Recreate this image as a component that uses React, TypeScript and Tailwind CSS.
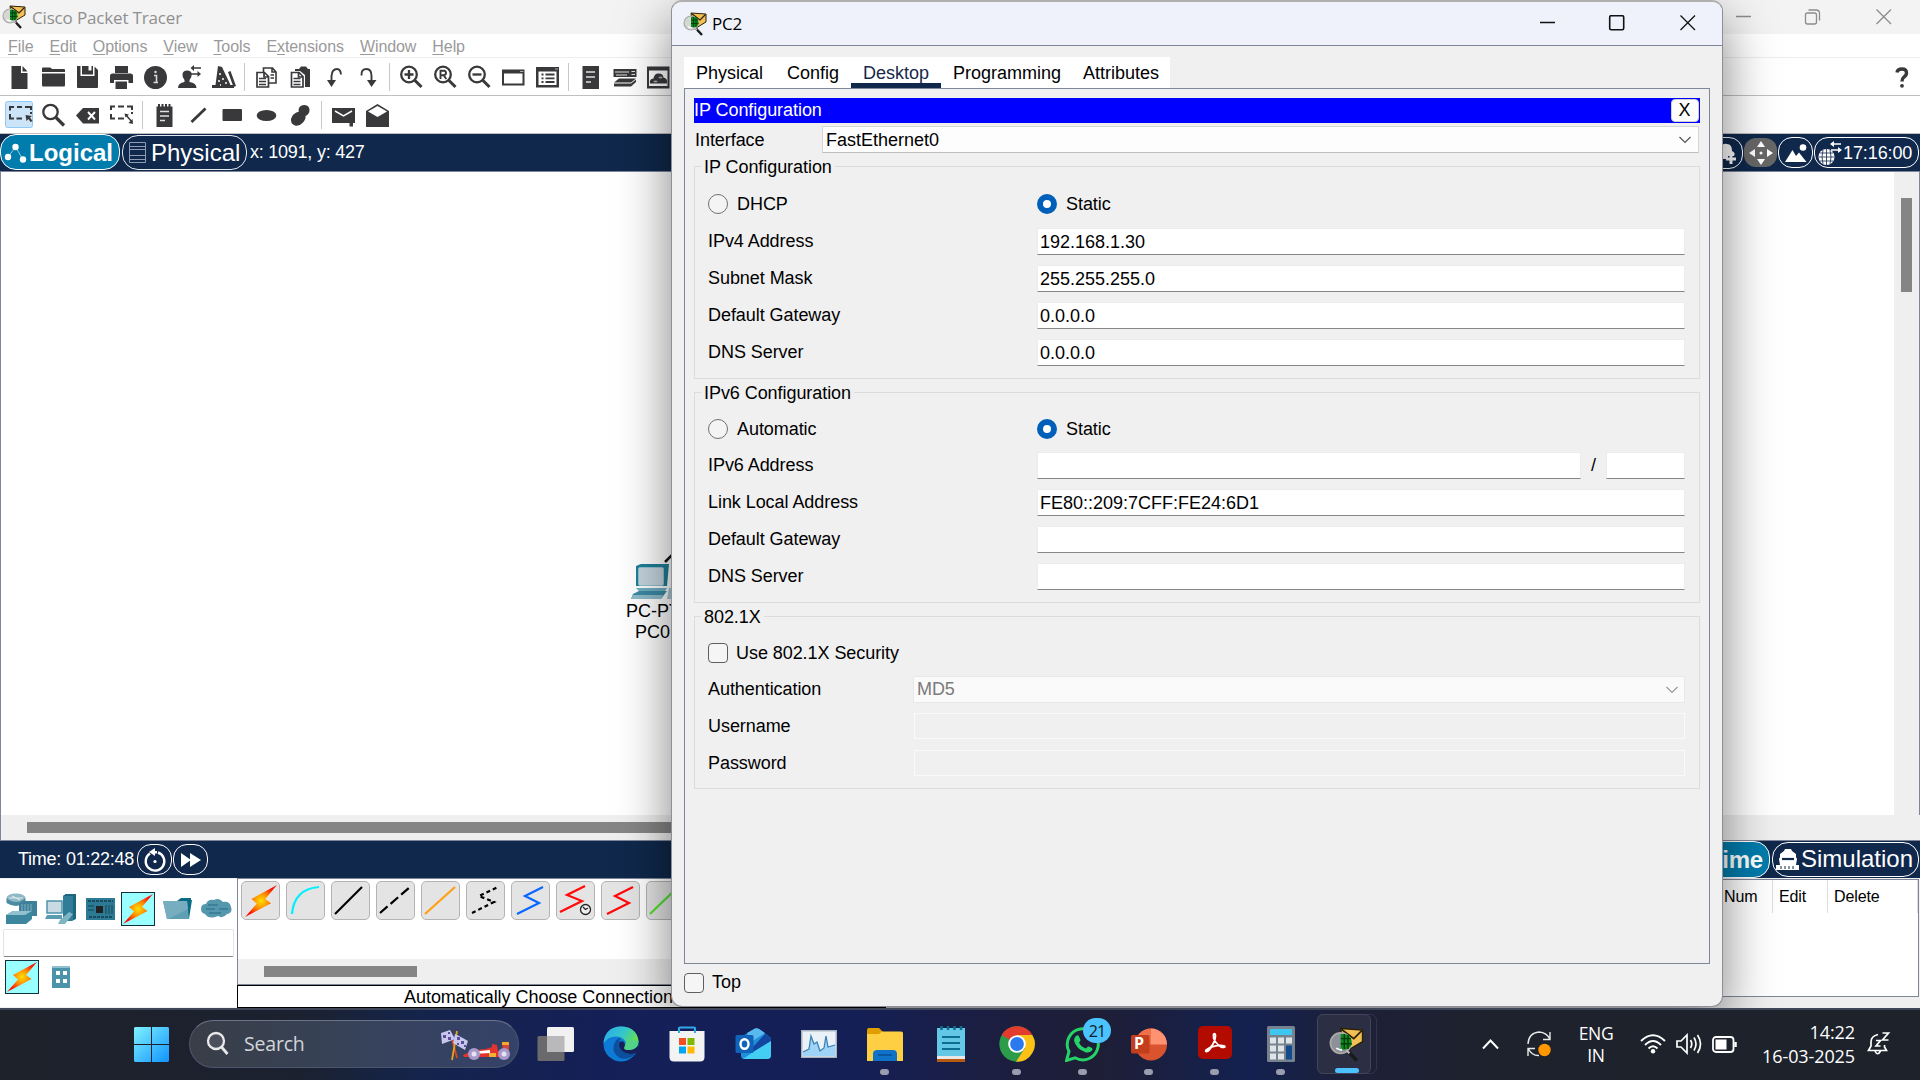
import React from "react";

const INK = "#39393b";

function Ico({ children }: { children?: React.ReactNode }) {
  return (
    <svg width="34" height="37" viewBox="0 0 34 37" fill={INK} stroke="none" className="shrink-0">
      {children}
    </svg>
  );
}

function Sep() {
  return (
    <div className="flex w-[9px] shrink-0 justify-center">
      <div className="mt-[5px] h-[28px] w-px bg-[#c8c8c8]" />
    </div>
  );
}

function TracerIcon({ size, dark = false }: { size: number; dark?: boolean }) {
  return (
    <svg width={size} height={size} viewBox="0 0 24 24" className="shrink-0">
      <path d="M8 1 L23 2 L23 10 L13 16 L9 9 Z" fill="#f1bf55" stroke="#2b2208" strokeWidth="1" />
      <path d="M8.5 1.5 L17 8 L22.5 2.5" fill="none" stroke="#2b2208" strokeWidth="1.2" />
      <circle cx="8" cy="11" r="7" fill={dark ? "#8d9098" : "#d5d8d2"} stroke="#a9aaa6" strokeWidth="1.2" />
      <path d="M8 5 C13 4 16 7 15.500 12 C14 15.500 11 16 8 15 Z" fill="#0a8a1e" />
      <path d="M8 8 H15 M8 11.500 H15.500 M10.500 5 V15 M13 5.500 V15" stroke="#033a0b" strokeWidth="0.9" />
      <path d="M5 14.500 Q7 16 9 15.500" stroke="#fff" strokeWidth="1.200" fill="none" />
      <path d="M13 16.500 L19 23" stroke="#1a1a1a" strokeWidth="2.400" />
      <path d="M12 16 L14 18" stroke="#bbb" strokeWidth="1.500" />
    </svg>
  );
}

/* ---------- application tool bars ---------- */

function Magnifier({ children }: { children?: React.ReactNode }) {
  return (
    <Ico>
      <circle cx="15" cy="16.500" r="7.800" fill="none" stroke={INK} strokeWidth="2.300" />
      <path d="M20.500 22 L27.500 29" stroke={INK} strokeWidth="3" />
      {children}
    </Ico>
  );
}

function ToolbarMain() {
  return (
    <div className="flex h-[38px] items-start border-b border-[#bfbfbf] bg-white pl-[2px]">
      <Ico>
        <path d="M9.500 8 H19 V15 H25.500 V31 H9.500 Z M20.500 8 L25.500 13.500 H20.500 Z" />
      </Ico>
      <Ico>
        <path d="M6 10.500 Q6 9.500 7 9.500 H14 Q15 9.500 16 11 H28 Q29 11 29 12 V14 H6 Z M6 15.500 H29 V27 Q29 28.500 28 28.500 H7 Q6 28.500 6 27 Z" />
      </Ico>
      <Ico>
        <path fillRule="evenodd" d="M7 8 H10.500 V18 H24.500 V8.500 L28 12 V29 Q28 30 27 30 H8 Q7 30 7 29 Z M12 8 H18.500 V12.500 H21.500 V8 H23 V16.500 H12 Z" />
      </Ico>
      <Ico>
        <path d="M11 8 H24 V15 H11 Z M6 18 Q6 15.500 8.500 15.500 H26.500 Q29 15.500 29 18 V25 H24.500 V22 H10 V25 H6 Z M11.500 23.500 H23 V31 H11.500 Z" />
      </Ico>
      <Ico>
        <circle cx="17.500" cy="19.500" r="11.500" />
        <path d="M16 17.500 H18.500 V24 M15.500 24.500 H20" stroke="#d8d8d8" strokeWidth="1.600" fill="none" />
        <circle cx="17.500" cy="14" r="1.200" fill="#ddd" />
      </Ico>
      <Ico>
        <path d="M6 30 Q6 25 12.500 24 V22 Q10 19 10.500 16 Q11 12.500 15 12.500 Q19.500 12.500 19.700 16 Q20 19 17.500 22 V24 Q24.500 25 24.500 30 Z" />
        <path d="M20 10 H29 M18.500 16 H27" stroke={INK} strokeWidth="1.600" />
        <path d="M22 7 V13 L18.500 10 Z M25.500 13 V19 L29 16 Z" />
      </Ico>
      <Ico>
        <path d="M12 8 L16 9 L24.500 27 H28 V30 H6 V27 H9.500 Z M22 14 L24.500 13 L30 28 L27.500 29 Z" />
        <path d="M13 16 h2 M16 21 h2 M12 23 h2 M19 25 h2 M14 27 h1" stroke="#fff" strokeWidth="1.500" />
      </Ico>
      <Sep />
      <Ico>
        <path d="M14.500 10 H23.500 L27 14 V25 H14.500 Z M23 10 V14 H27" fill="#fff" stroke={INK} strokeWidth="1.600" />
        <path d="M8 14.500 H15.500 L19.500 18.500 V29 H8 Z M15 14.500 V19 H19.500" fill="#fff" stroke={INK} strokeWidth="1.700" />
        <path d="M10 20.500 H17 M10 23.500 H17 M10 26.500 H17 M21.500 17 H25 M21.500 20 H25" stroke={INK} strokeWidth="1.300" />
      </Ico>
      <Ico>
        <path d="M12 11 H16 L18 8.500 H23 L25 11 H27 V29 H22 V17 L17 13 H12 Z" />
        <path d="M8.500 14.500 H16 L20 18.500 V29 H8.500 Z M15.500 14.500 V19 H20" fill="#fff" stroke={INK} strokeWidth="1.700" />
        <path d="M10.500 20.500 H17.500 M10.500 23.500 H17.500 M10.500 26.500 H17.500" stroke={INK} strokeWidth="1.300" />
      </Ico>
      <Ico>
        <path d="M14.500 24 V18 Q15 11 20 11 Q23.500 11 24 16.500" fill="none" stroke={INK} strokeWidth="1.900" />
        <path d="M10 22 L19 22 L14.500 29 Z" />
      </Ico>
      <Ico>
        <path d="M10.500 17.500 Q10 11 15.500 11 Q20.500 11 20.500 18 V24" fill="none" stroke={INK} strokeWidth="1.900" />
        <path d="M16 22 L25.500 22 L20.500 29 Z" />
      </Ico>
      <Sep />
      <Magnifier>
        <path d="M10.500 16.500 H19.500 M15 12 V21" stroke={INK} strokeWidth="2.300" />
      </Magnifier>
      <Magnifier>
        <path d="M12.500 21 V12.800 H16 Q18 13 18 15 Q18 17 15.500 17.200 H12.500 M15.500 17 L18.300 21" stroke={INK} strokeWidth="1.900" fill="none" />
      </Magnifier>
      <Magnifier>
        <path d="M10.500 16.500 H19.500" stroke={INK} strokeWidth="2.300" />
      </Magnifier>
      <Ico>
        <path fillRule="evenodd" d="M6 11.500 H28.500 V27.500 H6 Z M8 15.500 V25.500 H26.500 V15.500 Z" />
        <path d="M24 13.500 H27.500" stroke="#aaa" />
      </Ico>
      <Ico>
        <path fillRule="evenodd" d="M6 9 H29 V29.500 H6 Z M8.500 13.500 V27 H26.500 V13.500 Z" />
        <path d="M11.500 16.500 H13.500 M15.500 16.500 H24.500 M11.500 20.300 H13.500 M15.500 20.300 H24.500 M11.500 24 H13.500 M15.500 24 H24.500" stroke={INK} strokeWidth="1.800" />
        <path d="M25 11 H28" stroke="#aaa" />
      </Ico>
      <Sep />
      <Ico>
        <path d="M9.500 8 H26 V31 H9.500 Z" />
        <path d="M13 14 H22 M13 19 H22 M13 24 H18" stroke="#e0e0e0" strokeWidth="1.500" />
      </Ico>
      <Ico>
        <path d="M6.500 11 H29.500 V19 H6.500 Z" />
        <path d="M8 14 H22 M24.500 13.500 H28 M24.500 16.500 H28 M9 17 H20" stroke="#ddd" strokeWidth="1.200" />
        <path d="M12 20.500 H29 L24 24.500 H7 Z M7 25.500 H24 L29 21.500 V24 L24 28.500 H7 Z" />
      </Ico>
      <Ico>
        <path fillRule="evenodd" d="M6 8.500 H28.500 V30.500 H6 Z M8 12.500 V28 H26.500 V12.500 Z" />
        <path d="M9 25.500 Q8 21 12.500 20.500 Q13.500 15 18 15.500 Q22 15.500 22.500 19.500 Q27 20.500 26 25.500 Z" />
        <ellipse cx="14.500" cy="23.500" rx="2" ry="1" fill="#aaa" />
        <ellipse cx="19.500" cy="19.500" rx="2" ry="1" fill="#aaa" />
      </Ico>
      <svg width="22" height="37" viewBox="0 0 22 37" className="mr-[7px] ml-auto">
        <path d="M6 14.500 Q6.500 11 11 11 Q15.500 11 15.500 15 Q15.500 17.500 12.500 19.500 Q11 20.700 11 23.500" fill="none" stroke={INK} strokeWidth="3.400" />
        <circle cx="11" cy="27.800" r="1.900" fill={INK} />
      </svg>
    </div>
  );
}

function ToolbarDraw() {
  return (
    <div className="flex h-[38px] items-start border-b border-[#bfbfbf] bg-white pl-[2px]">
      <Ico>
        <rect x="3.500" y="5.500" width="27" height="26" rx="2" fill="#cce4f7" stroke="#90c8f6" />
        <path d="M8 14.500 V11 H12 M15 11 H20 M23 11 H29 V14 M8 18 V22.500 H12 M14.500 22.500 H20 M29 16 V18" fill="none" stroke={INK} strokeWidth="2" />
        <path d="M23.500 19 L30 20 L28 21.500 L30.500 25 L28.500 26 L26.500 23 L24.500 25 Z" />
      </Ico>
      <Ico>
        <circle cx="14.500" cy="16" r="7.200" fill="none" stroke={INK} strokeWidth="2.300" />
        <path d="M20 21.500 L28 29.500" stroke={INK} strokeWidth="3.200" />
      </Ico>
      <Ico>
        <path d="M6 19.500 L13 12 H29 V27.500 H13 Z" />
        <path d="M18 16 L25 23.500 M25 16 L18 23.500" stroke="#fff" strokeWidth="1.900" />
      </Ico>
      <Ico>
        <path d="M7 14 V10.500 H11 M14 10.500 H20 M23 10.500 H28 V14 M7 18 V22.500 H11 M14 22.500 H20 M28 16 V18" fill="none" stroke={INK} strokeWidth="2" />
        <path d="M22 19 L28 26" stroke={INK} strokeWidth="1.500" />
        <path d="M20.500 17.500 L25 18.500 L21.500 21.500 Z M29 28 L24.500 27 L28.500 23 Z" />
      </Ico>
      <Sep />
      <Ico>
        <path d="M9.500 10.500 H25.500 V31 H9.500 Z M11 8 h2 v3 h-2z M14.500 8 h2 v3 h-2z M18 8 h2 v3 h-2z M21.500 8 h2 v3 h-2z" />
        <path d="M13 15.500 H22 M13 20 H22 M13 24.500 H18" stroke="#e0e0e0" strokeWidth="1.500" />
      </Ico>
      <Ico>
        <path d="M10.500 26 L24.500 12.500" stroke={INK} strokeWidth="2.800" />
      </Ico>
      <Ico>
        <rect x="7.500" y="13" width="19.500" height="12" rx="1" />
      </Ico>
      <Ico>
        <ellipse cx="17.500" cy="19.500" rx="9.800" ry="5.500" />
      </Ico>
      <Ico>
        <path d="M16 12 Q17.500 9 21.500 9 Q26.500 9.500 26.500 14 Q26.500 18 22.500 20 Q23 23 20 26.500 Q16.500 30.500 12 29.500 Q7.500 28 8 23 Q9 17.500 16 15.500 Q15 14 16 12 Z" />
      </Ico>
      <Sep />
      <Ico>
        <path d="M6 12 H29 V27 H27 V30.500 H23.500 V27 H6 Z" />
        <path d="M9 15 L17.500 20 L26 15" fill="none" stroke="#fff" strokeWidth="1.500" />
      </Ico>
      <Ico>
        <path d="M6 15 L17.500 8 L29 15 V31 H6 Z" />
        <path d="M8 15.500 L17.500 10 L27 15.500 L17.500 21 Z" fill="#fff" />
      </Ico>
    </div>
  );
}

const MENUS = ["File", "Edit", "Options", "View", "Tools", "Extensions", "Window", "Help"];

function MenuBar() {
  return (
    <div className="flex h-[24px] items-center gap-[16px] border-b border-[#ededed] bg-white pt-[2px] pl-[8px] text-[16px] tracking-[-0.08px] text-[#9a9a9a]">
      {MENUS.map((m) =>
        m === "Extensions" ? (
          <span key={m}>
            E<span className="underline underline-offset-2">x</span>tensions
          </span>
        ) : (
          <span key={m}>
            <span className="underline underline-offset-2">{m[0]}</span>
            {m.slice(1)}
          </span>
        ),
      )}
    </div>
  );
}

function LocationBar() {
  return (
    <div className="flex h-[38px] items-start border-b border-[#80869a] bg-[#0f284b] text-white">
      <div className="flex h-[36px] w-[120px] items-center rounded-[16px] border border-white bg-[#007cad] pl-[3px]">
        <svg width="25" height="24" viewBox="0 0 25 24" fill="#fff">
          <path d="M4 17 L11.500 7 L19 19.500" stroke="#9ccbe0" strokeWidth="1" fill="none" />
          <circle cx="4" cy="17" r="3.200" />
          <circle cx="11.500" cy="7" r="3.200" />
          <circle cx="19" cy="19.500" r="3.200" />
        </svg>
        <span className="pt-[2px] text-[24px] font-bold">Logical</span>
      </div>
      <div className="mt-px ml-[2px] flex h-[35px] w-[125px] items-center rounded-[16px] border border-[#e4e7ee] pl-[6px]">
        <svg width="17" height="22" viewBox="0 0 17 22" fill="none" stroke="#8e9bb3">
          <path d="M0.500 0.500 H16.500 V20.500 H0.500 Z M0.500 4.500 H16.500 M0.500 7.500 H16.500 M0.500 13.500 H16.500 M0.500 17.500 H16.500" />
        </svg>
        <span className="ml-[5px] text-[24px]">Physical</span>
      </div>
      <span className="ml-[3px] self-center text-[18px] tracking-[-0.24px]">x: 1091, y: 427</span>
      <div className="ml-auto flex h-[32px] w-[44px] translate-y-[3px] items-center justify-end rounded-[14px] border border-white pr-[4px]">
        <svg width="26" height="24" viewBox="0 0 26 24" fill="#fff">
          <path d="M4 16 Q1 9 8 8 Q10 2 15 3 Q20 3 20 10 Q24 12 22 15 H16 V18 H6 Z" />
          <path d="M19 13 V23 M14 18 H24" stroke="#fff" strokeWidth="3" />
        </svg>
      </div>
      <div className="mt-[4px] ml-px flex h-[29px] w-[33px] items-center justify-center rounded-[12px] bg-[#686868]">
        <svg width="24" height="24" viewBox="0 0 24 24" fill="#fff">
          <path d="M12 0 L16 6 H8 Z M12 24 L16 18 H8 Z M0 12 L6 8 V16 Z M24 12 L18 8 V16 Z" />
          <circle cx="12" cy="12" r="1.500" />
        </svg>
      </div>
      <div className="mt-[3px] ml-px flex h-[31px] w-[35px] items-center justify-center rounded-[14px] border border-white">
        <svg width="24" height="22" viewBox="0 0 24 22" fill="#fff">
          <path d="M1 20 L8.500 8 L12 14 L15 10.500 L22.500 20 Z" />
          <circle cx="19" cy="5.500" r="3.300" />
        </svg>
      </div>
      <div className="mt-[3px] mr-px ml-px flex h-[31px] w-[105px] items-center rounded-[14px] border border-white pl-[3px]">
        <svg width="24" height="26" viewBox="0 0 24 26" fill="#fff">
          <circle cx="8.500" cy="17" r="8" />
          <path d="M1 17 H16 M2 13 H15 M2 21 H15 M8.500 9 V25 M5 10 Q3 17 5 24 M12 10 Q14 17 12 24" stroke="#0f284b" strokeWidth="0.800" fill="none" />
          <path d="M15 4 H23 M13 10 H21" stroke="#fff" strokeWidth="1.600" />
          <path d="M16 1 V7 L12 4 Z M20 7 V13 L24 10 Z" />
        </svg>
        <span className="ml-[1px] pt-px text-[18px] tracking-[-0.1px]">17:16:00</span>
      </div>
    </div>
  );
}

function Workspace() {
  return (
    <div className="flex h-[669px] flex-col border-b border-l border-[#80869a] bg-[#efefef]">
      <div className="flex h-[643px]">
        <div className="relative w-[1893px] overflow-hidden bg-white">
          <div className="absolute top-[382px] left-[618px] w-[60px] text-[18px] leading-[21px] text-black">
            <svg width="56" height="48" viewBox="0 0 56 48" className="ml-[8px]">
              <path d="M38 8 L50 -4" stroke="#111" strokeWidth="2.500" />
              <path d="M9 12 L14 10 H42 L40 32 H9 Z" fill="#1f7f98" />
              <rect x="11.500" y="13.500" width="25" height="18" rx="1.500" fill="#c5d5de" stroke="#8fc0ce" />
              <path d="M9 34 H40 L38 37 H12 Z" fill="#6fb0c4" />
              <path d="M12 37 H40 L34 45 H4 L6 40 Z" fill="#3c8ba5" />
              <path d="M6 41 H36 L34 45 H4 Z" fill="#8fbccb" />
              <path d="M42 34 H56 V45 H40 Z" fill="#a6cad6" />
            </svg>
            <div className="mt-[-1px] ml-[7px] w-[60px] whitespace-nowrap">PC-PT</div>
            <div className="ml-[16px]">PC0</div>
          </div>
        </div>
        <div className="flex flex-1 justify-end border-r border-[#80869a] pr-[7px]">
          <div className="mt-[26px] h-[94px] w-[11px] bg-[#858585]" />
        </div>
      </div>
      <div className="mt-[7px] ml-[26px] h-[11px] w-[1200px] bg-[#858585]" />
    </div>
  );
}

function TimeBar() {
  return (
    <div className="flex h-[37px] items-start bg-[#0f284b] pl-[18px] text-white">
      <span className="w-[119px] self-center text-[18px] tracking-[-0.24px] whitespace-nowrap">Time: 01:22:48</span>
      <div className="mt-[3px] flex h-[31px] w-[35px] items-center justify-center rounded-[14px] border border-white">
        <svg width="24" height="26" viewBox="0 0 24 26" fill="#fff">
          <path d="M7 6.500 A9.300 9.300 0 1 0 15 5.500" fill="none" stroke="#fff" strokeWidth="2.400" />
          <path d="M6 5 L12 1 V9 Z M10 4 H14 V6.500 H10 Z" />
          <circle cx="12" cy="14.500" r="1.600" />
        </svg>
      </div>
      <div className="mt-[3px] ml-px flex h-[31px] w-[35px] items-center justify-center rounded-[14px] border border-white">
        <svg width="20" height="16" viewBox="0 0 20 16" fill="#fff">
          <path d="M0 1 L10 8 L0 15 Z M9 1 L20 8 L9 15 Z" />
        </svg>
      </div>
      <div className="ml-auto flex h-[37px] w-[140px] items-center justify-end rounded-[16px] border border-white bg-[#007cad] pr-[6px]">
        <span className="text-[24px] font-bold tracking-[-0.2px]">Realtime</span>
      </div>
      <div className="mt-px mr-px ml-[2px] flex h-[35px] w-[147px] items-center rounded-[16px] border border-white pl-[3px]">
        <svg width="24" height="22" viewBox="0 0 24 22" fill="#fff">
          <path d="M8 2 L9 0 H15 L16 2 L20 5 V8 L21 10 L20 16 H23 V21 H0 V16 H4 L3 10 L4 8 V5 Z" />
          <path d="M6 10 H18" stroke="#0f284b" strokeWidth="2.200" />
          <path d="M5 17 V20 M9 17 V20 M13 17 V20 M17 17 V20" stroke="#0f284b" strokeWidth="1" />
        </svg>
        <span className="ml-px pb-px text-[24px]">Simulation</span>
      </div>
    </div>
  );
}

/* ---------- device palette ---------- */

function Bolt({ w, h }: { w: number; h: number }) {
  return (
    <svg width={w} height={h} viewBox="0 0 32 32">
      <defs>
        <radialGradient id="boltFill" cx="0.5" cy="0.5" r="0.5">
          <stop offset="0" stopColor="#ffe100" />
          <stop offset="0.5" stopColor="#ff8a00" />
          <stop offset="1" stopColor="#fb1005" />
        </radialGradient>
      </defs>
      <path d="M31 1 L20 14 L25.500 18 L1 31 L12 18.500 L7 14 Z" fill="url(#boltFill)" />
    </svg>
  );
}

function DevicePalette() {
  return (
    <div className="flex w-[237px] flex-col border-t border-b border-[#efefef] bg-white">
      <div className="mt-[13px] flex h-[34px] items-center pl-[6px]">
        <svg width="33" height="32" viewBox="0 0 33 32">
          <ellipse cx="10" cy="5" rx="9.500" ry="4.500" fill="#8fb8c6" />
          <path d="M0.500 5 Q10 13 19.500 5 V10 Q10 16 0.500 10 Z" fill="#4c8ca3" />
          <path d="M3 5 H17 M6 3 L14 7" stroke="#dbe8ec" strokeWidth="1.200" />
          <path d="M13 11 L18 8 H31 V23 H22 L13 18 Z" fill="#3f7f97" />
          <path d="M16 11 V20 M19 11 V20 M22 11 V20 M25 11 V22" stroke="#7fb2c3" />
          <path d="M0 22 L7 18 H26 V26 L20 31 H0 Z" fill="#3d86a0" />
          <path d="M0 22 L7 18 H26 L19 22 Z" fill="#92c0cf" />
        </svg>
        <svg width="33" height="32" viewBox="0 0 33 32" className="ml-[6px]">
          <path d="M18 3 L21 1 H31 V26 L27 28 H18 Z" fill="#2f7d96" />
          <path d="M18 3 L21 1 H31 L28 3 Z M28 3 V27 L31 25 V1 Z" fill="#1d667e" />
          <rect x="2" y="8" width="15" height="12" fill="#c8dbe2" stroke="#4e93aa" strokeWidth="1.500" />
          <path d="M2 22 H17 V26 H0 Z" fill="#5c9cb1" />
          <path d="M15 27 L24 19 L28 21 L20 31 L13 31 Z" fill="#7fb4c5" />
        </svg>
        <svg width="29" height="22" viewBox="0 0 29 22" className="ml-[8px]">
          <rect width="29" height="22" fill="#2c7a94" />
          <path d="M2 3 H27 M3 19 H26" stroke="#123f50" strokeWidth="1.500" strokeDasharray="3 1" />
          <rect x="10" y="8" width="7" height="7" fill="#222" />
          <path d="M2 8 H8 M2 12 H8 M20 7 V16 M23 7 V16 M26 7 V16" stroke="#1b5468" strokeWidth="1.300" />
        </svg>
        <div className="ml-[6px] flex h-[34px] w-[34px] items-center justify-center border border-[#12303a] bg-[#99ffff]">
          <Bolt w={32} h={32} />
        </div>
        <svg width="30" height="24" viewBox="0 0 30 24" className="ml-[8px]">
          <path d="M14 4 L18 1 H28 V3 H29 L26 22 H20 Z" fill="#0b6c86" />
          <path d="M0 4 H24 L26 22 H4 Z" fill="#5f9fb3" />
          <path d="M0 4 H24 L25 12 L5 22 H4 Z" fill="#77aebf" />
        </svg>
        <svg width="31" height="22" viewBox="0 0 31 22" className="ml-[8px]">
          <path d="M4 16 Q0 15 0 11 Q0 6 5 6 Q7 1 13 2 Q18 -1 22 4 Q29 3 30 9 Q32 15 26 16 Q22 21 17 18 Q8 22 4 16 Z" fill="#5597ad" />
          <path d="M7 7 H17 M5 11 H14 M18 11 H27 M8 15 H20" stroke="#347a92" strokeWidth="1.500" />
        </svg>
      </div>
      <div className="mt-[3px] ml-[3px] h-[28px] w-[231px] rounded-[2px] border border-b-[#868686] border-[#e4e4e4] bg-white" />
      <div className="mt-[3px] ml-[5px] flex items-center">
        <div className="flex h-[34px] w-[34px] items-center justify-center border border-[#12303a] bg-[#99ffff]">
          <Bolt w={32} h={32} />
        </div>
        <svg width="18" height="22" viewBox="0 0 18 22" className="ml-[13px]">
          <rect width="18" height="22" fill="#4a93ab" />
          <rect width="18" height="2" fill="#8fc0cf" />
          <path d="M4 5 h4 v4 h-4z M11 5 h4 v4 h-4z M4 13 h4 v4 h-4z M11 13 h4 v4 h-4z" fill="#fff" />
        </svg>
      </div>
    </div>
  );
}

function Cable({ children }: { children: React.ReactNode }) {
  return (
    <div className="flex h-[39px] w-[39px] shrink-0 items-center justify-center rounded-[5px] border border-[#b4b4b4] bg-[#e4e4e4]">
      <svg width="35" height="35" viewBox="0 0 35 35" fill="none" strokeWidth="2.200">
        {children}
      </svg>
    </div>
  );
}

function CablePanel() {
  return (
    <div className="flex w-[649px] flex-col border-l border-[#80869a]">
      <div className="flex h-[81px] items-start gap-[6px] overflow-hidden border-t border-[#80869a] bg-white pt-[2px] pl-[3px]">
        <div className="flex h-[39px] w-[39px] shrink-0 items-center justify-center rounded-[5px] border border-[#b4b4b4] bg-[#e4e4e4]">
          <Bolt w={34} h={34} />
        </div>
        <Cable>
          <path d="M4 31 Q6 6 31 4" stroke="#00f0ff" />
        </Cable>
        <Cable>
          <path d="M2 31 L29 4" stroke="#000" />
        </Cable>
        <Cable>
          <path d="M2 30 L32 4" stroke="#000" strokeDasharray="10 4" />
        </Cable>
        <Cable>
          <path d="M2 31 L32 4" stroke="#ffa013" />
        </Cable>
        <Cable>
          <path d="M4 30 L26 19 L11 13 L30 4" stroke="#000" strokeDasharray="4 3" />
        </Cable>
        <Cable>
          <path d="M4 31 L26 20 L12 13 L30 4" stroke="#0a66ff" />
        </Cable>
        <Cable>
          <path d="M2 29 L24 18 L9 12 L27 3" stroke="#ff0a0a" />
          <circle cx="27.500" cy="26.500" r="5" stroke="#222" strokeWidth="1.300" fill="#eee" />
          <path d="M25 24 L27.500 26.500 L30 25" stroke="#222" strokeWidth="1.300" />
        </Cable>
        <Cable>
          <path d="M4 31 L26 20 L12 13 L30 4" stroke="#ff0a0a" />
        </Cable>
        <Cable>
          <path d="M2 31 L30 4" stroke="#4fe22a" />
        </Cable>
      </div>
      <div className="h-[26px] border-b border-[#80869a] bg-[#efefef] pt-[7px] pl-[26px]">
        <div className="h-[11px] w-[153px] bg-[#858585]" />
      </div>
      <div className="-ml-px flex h-[23px] items-center border border-black bg-white pt-px pl-[166px] text-[18px] tracking-[-0.04px] whitespace-nowrap text-black">
        Automatically Choose Connection
      </div>
    </div>
  );
}

function PduPanel() {
  return (
    <div className="flex flex-1 flex-col bg-[#efefef] pt-px pr-px">
      <div className="flex h-[118px] items-start justify-end border border-[#80869a] bg-white text-[16px] tracking-[-0.1px] text-black">
        <div className="flex h-[33px] w-[61px] items-center border-r border-[#dedede] pt-px pl-[12px]">Num</div>
        <div className="flex h-[33px] w-[55px] items-center border-r border-[#dedede] pt-px pl-[6px]">Edit</div>
        <div className="flex h-[33px] w-[90px] items-center border-r border-[#dedede] pt-px pl-[6px]">Delete</div>
      </div>
    </div>
  );
}

/* ---------- PC2 dialog ---------- */

function Group({ title, className, children }: { title: string; className: string; children: React.ReactNode }) {
  return (
    <div className={`border border-[#dcdcdc] ${className}`}>
      <div className="-mt-[13px] ml-[6px] flex h-[26px] w-fit items-center bg-[#f0f0f0] px-[3px]">{title}</div>
      {children}
    </div>
  );
}

function Radio({ on = false, label }: { on?: boolean; label: string }) {
  return (
    <div className="flex items-center gap-[9px]">
      <div
        className={
          on
            ? "h-[20px] w-[20px] rounded-full border-[6px] border-[#005fb8] bg-white"
            : "h-[20px] w-[20px] rounded-full border border-[#707070] bg-[#f4f4f4]"
        }
      />
      <span className="pt-px">{label}</span>
    </div>
  );
}

function Check({ label }: { label: string }) {
  return (
    <div className="flex items-center gap-[8px]">
      <div className="h-[20px] w-[20px] rounded-[4px] border border-[#5f5f5f] bg-[#f5f5f5]" />
      <span>{label}</span>
    </div>
  );
}

function Field({ value = "", className = "flex-1" }: { value?: string; className?: string }) {
  return (
    <div className={`flex h-[27px] items-center border border-b-[#868686] border-[#ececec] bg-white pt-[2px] pl-[2px] tracking-normal ${className}`}>
      {value}
    </div>
  );
}

function Row({ label, children }: { label: string; children: React.ReactNode }) {
  return (
    <div className="mt-[10px] flex h-[27px] items-center pr-[14px] pl-[13px]">
      <span className="w-[329px]">{label}</span>
      {children}
    </div>
  );
}

function Choice({ left }: { left: string }) {
  return (
    <div className="flex h-[28px] items-center pl-[13px]">
      <div className="w-[329px]">
        <Radio label={left} />
      </div>
      <Radio on label="Static" />
    </div>
  );
}

function Chevron({ color }: { color: string }) {
  return (
    <svg width="12" height="8" viewBox="0 0 12 8" fill="none" stroke={color} strokeWidth="1.200" className="ml-auto">
      <path d="M0.500 1 L6 6.500 L11.500 1" />
    </svg>
  );
}

function Dialog() {
  return (
    <div className="absolute top-0 left-[671px] flex h-[1007px] w-[1052px] flex-col overflow-hidden rounded-[11px] border border-t-2 border-[#8c9098] border-t-[#b0b0b0] bg-[#f0f0f0] text-[18px] tracking-[-0.06px] text-black shadow-[0_20px_52px_rgba(0,0,0,0.5)]">
      <div className="flex h-[44px] shrink-0 items-center border-b border-[#80869a] bg-[#eff2fa] pl-[11px]">
        <TracerIcon size={24} />
        <span className="ml-[5px] font-['Open_Sans','Noto_Sans',sans-serif] text-[17px] tracking-[-0.2px]">PC2</span>
        <svg width="156" height="16" viewBox="0 0 156 16" fill="none" stroke="#111" strokeWidth="1.300" className="mr-[26px] mb-px ml-auto">
          <path d="M0 7.500 H15 M140.500 0.500 L155 15 M155 0.500 L140.500 15" />
          <rect x="69.700" y="0.700" width="14" height="14" rx="1.500" strokeWidth="1.600" />
        </svg>
      </div>
      <div className="mt-[11px] ml-[12px] flex h-[31px] w-[486px] shrink-0 items-center bg-white pt-px text-[18px] tracking-normal">
        <div className="w-[91px] pl-[12px]">Physical</div>
        <div className="w-[76px] pl-[12px]">Config</div>
        <div className="flex h-[30px] w-[90px] items-center justify-center border-b-[5px] border-[#0f284b] pt-[5px] text-[#17284b]">Desktop</div>
        <div className="pl-[12px]">Programming</div>
        <div className="ml-auto pr-[11px]">Attributes</div>
      </div>
      <div className="ml-[12px] flex h-[876px] w-[1026px] shrink-0 flex-col border border-[#80869a] p-[9px]">
        <div className="flex h-[25px] shrink-0 items-center justify-between bg-[#0000ff] pr-px text-white">
          <span>IP Configuration</span>
          <div className="flex h-[23px] w-[28px] items-center justify-center rounded-[4px] border border-[#d0d0d0] bg-[#fdfdfd] pr-px text-black">X</div>
        </div>
        <div className="mt-[3px] flex h-[27px] shrink-0 items-center pr-px pl-px">
          <span className="w-[127px] pt-px">Interface</span>
          <div className="flex h-[27px] flex-1 items-center rounded-[1px] border border-b-[#bdbdbd] border-[#d6d6d6] bg-[#fdfdfd] pr-[7px] pl-[3px]">
            <span className="pt-px tracking-normal">FastEthernet0</span>
            <Chevron color="#555" />
          </div>
        </div>
        <Group title="IP Configuration" className="mt-[13px] h-[213px]">
          <div className="h-[10px]" />
          <Choice left="DHCP" />
          <Row label="IPv4 Address">
            <Field value="192.168.1.30" />
          </Row>
          <Row label="Subnet Mask">
            <Field value="255.255.255.0" />
          </Row>
          <Row label="Default Gateway">
            <Field value="0.0.0.0" />
          </Row>
          <Row label="DNS Server">
            <Field value="0.0.0.0" />
          </Row>
        </Group>
        <Group title="IPv6 Configuration" className="mt-[13px] h-[211px]">
          <div className="h-[9px]" />
          <Choice left="Automatic" />
          <div className="-mt-px" />
          <Row label="IPv6 Address">
            <Field className="w-[544px]" />
            <span className="w-[25px] text-center">/</span>
            <Field />
          </Row>
          <Row label="Link Local Address">
            <Field value="FE80::209:7CFF:FE24:6D1" />
          </Row>
          <Row label="Default Gateway">
            <Field />
          </Row>
          <Row label="DNS Server">
            <Field />
          </Row>
        </Group>
        <Group title="802.1X" className="mt-[13px] h-[173px]">
          <div className="mt-[9px] mb-[9px] flex h-[28px] items-center pl-[13px]">
            <Check label="Use 802.1X Security" />
          </div>
          <div className="flex h-[27px] items-center pr-[14px] pl-[13px]">
            <span className="w-[205px]">Authentication</span>
            <div className="flex h-[27px] flex-1 items-center border border-[#e8e8e8] bg-[#fafafa] pr-[6px] pl-[3px] text-[#7b7b7b]">
              MD5
              <Chevron color="#999" />
            </div>
          </div>
          <div className="mt-[10px] flex h-[26px] items-center pr-[14px] pl-[13px]">
            <span className="w-[206px]">Username</span>
            <div className="h-[26px] flex-1 border border-[#fafafa]" />
          </div>
          <div className="mt-[11px] flex h-[26px] items-center pr-[14px] pl-[13px]">
            <span className="w-[206px]">Password</span>
            <div className="h-[26px] flex-1 border border-[#fafafa]" />
          </div>
        </Group>
      </div>
      <div className="flex h-[37px] items-center pl-[12px]">
        <Check label="Top" />
      </div>
    </div>
  );
}

/* ---------- Windows task bar ---------- */

function Slot({ running = false, children }: { running?: boolean; children: React.ReactNode }) {
  return (
    <div className="relative flex h-[70px] w-[66px] shrink-0 items-center justify-center">
      {children}
      {running && <div className="absolute bottom-[4px] left-[28px] h-[6px] w-[9px] rounded-full bg-[#9a9cb0]" />}
    </div>
  );
}

function Taskbar() {
  return (
    <div className="relative z-10 flex h-[72px] items-center border-t-2 border-[#3f4658] bg-[linear-gradient(90deg,#1e222b_0px,#1b212f_300px,#14244c_420px,#151f58_620px,#141f56_850px,#1c1e3e_1010px,#1e1e36_1100px,#132150_1250px,#1d2038_1350px,#1e222c_1500px,#1e222b_1920px)] pb-[2px] pl-[118px] font-['Open_Sans','Noto_Sans',sans-serif] text-white">
      <Slot>
        <svg width="35" height="35" viewBox="0 0 35 35">
          <defs>
            <linearGradient id="win" x1="0" y1="0" x2="1" y2="1">
              <stop offset="0" stopColor="#80f2ff" />
              <stop offset="1" stopColor="#0f93ff" />
            </linearGradient>
          </defs>
          <path d="M1 0 H17 V17 H0 V1 Z M18 0 H34 L35 1 V17 H18 Z M0 18 H17 V35 H1 L0 34 Z M18 18 H35 V34 L34 35 H18 Z" fill="url(#win)" />
        </svg>
      </Slot>
      <div className="mr-[3px] ml-[5px] flex h-[48px] w-[330px] shrink-0 items-center rounded-full border border-t-[#6d7488] border-[#4c556e] bg-[linear-gradient(90deg,#393e47_0%,#374258_45%,#354269_100%)] pl-[16px]">
        <svg width="24" height="26" viewBox="0 0 24 26" fill="none" stroke="#e8e8e8">
          <circle cx="10" cy="10" r="8" strokeWidth="2.300" fill="#4b505c" />
          <path d="M15.500 16 L21.500 23" strokeWidth="2.800" />
        </svg>
        <span className="ml-[14px] text-[19.500px] tracking-[-0.2px] text-[#d3d5da]">Search</span>
        <svg width="70" height="34" viewBox="0 0 70 34" className="mr-[8px] ml-auto">
          <path d="M10 4 L17 31" stroke="#d9481c" strokeWidth="1.800" />
          <path d="M17 4 L12 33" stroke="#e8a21c" strokeWidth="1.800" />
          <path d="M1 6 L10 3 L15 12 L10 14 L2 17 Z" fill="#c9c6ee" />
          <path d="M15 7 L21 10 L28 14 L25 23 L18 19 L13 16 Z" fill="#c9c6ee" />
          <path d="M3 8 h3 v3 h-3z M8 10 h3 v3 h-3z M8 5 h2 v2 h-2z M17 10 h3 v3 h-3z M21 14 h3 v3 h-3z M17 16 h2 v2 h-2z M24 18 h2 v2 h-2z" fill="#5a4f9c" />
          <path d="M23 28 Q34 22 46 22 L52 20 V17 L57 18 L58 24 H66 V30 H24 Z" fill="#e2342d" />
          <path d="M62 15 H69 V24 H63 Z" fill="#d7443a" />
          <path d="M62 15 H69 V18 H62 Z" fill="#f5a52c" />
          <path d="M30 25 L50 23 V26 L32 27 Z" fill="#fff" />
          <path d="M49 26 h7 v4 h-7z" fill="#f0b030" />
          <circle cx="34" cy="27" r="6" fill="#a79acb" />
          <circle cx="34" cy="27" r="2.500" fill="#e6e2f4" />
          <circle cx="64" cy="27" r="6" fill="#a79acb" />
          <circle cx="64" cy="27" r="2.500" fill="#e6e2f4" />
        </svg>
      </div>
      <Slot>
        <svg width="37" height="36" viewBox="0 0 37 36">
          <rect x="0.500" y="10" width="27" height="25" rx="1.500" fill="#6a6a6c" />
          <rect x="10" y="1" width="27" height="25" rx="1.500" fill="#f1f1f1" />
          <path d="M10 10 H27.500 V26 H10 Z" fill="#b9b9bb" />
        </svg>
      </Slot>
      <Slot>
        <svg width="36" height="36" viewBox="0 0 36 36">
          <defs>
            <linearGradient id="edgeTop" x1="0" y1="0" x2="1" y2="0.400">
              <stop offset="0" stopColor="#2aa9ee" />
              <stop offset="0.600" stopColor="#35c7c8" />
              <stop offset="1" stopColor="#66df4f" />
            </linearGradient>
          </defs>
          <circle cx="18" cy="18" r="17.500" fill="#0d7bd6" />
          <path d="M0.500 17 Q2 1 18 0.500 Q34 1 35.500 15 Q35.500 23 27 24 Q20 24.500 21.500 21 Q25 15 18 11.500 Q8 8 0.500 17 Z" fill="url(#edgeTop)" />
          <path d="M12 16 Q8 24 14 30 Q20 36 31 29.500 Q34 27 33 27 Q25 30 19 25 Q14 21 16 16 Q17 13 18 12 Q14 12 12 16 Z" fill="#0c4f9c" />
          <path d="M21.500 21 Q20 24.500 27 24 Q33 23.500 35 19 Q36 23 33.500 27 Q25 30 19 25 Q14.500 21 16.500 16 Q20 14 21.500 17 Q22.500 19 21.500 21 Z" fill="#17205a" />
          <path d="M21.500 21 Q20 24.500 27 24 Q35 23 35.500 15 L30 14 L23 17 Z" fill="#52d488" />
        </svg>
      </Slot>
      <Slot>
        <svg width="36" height="36" viewBox="0 0 36 36">
          <path d="M10 7 V2.500 Q10 1.500 11 1.500 H25 Q26 1.500 26 2.500 V7" fill="none" stroke="#33a8e8" strokeWidth="2.200" />
          <path d="M0.500 5 H35.500 V31 Q35.500 35.500 31 35.500 H5 Q0.500 35.500 0.500 31 Z" fill="#f3f3f3" />
          <path d="M10 4 V7 M26 4 V7" stroke="#33a8e8" strokeWidth="2" />
          <path d="M10 12 h7 v7 h-7z" fill="#f25022" />
          <path d="M18.500 12 h7 v7 h-7z" fill="#7fba00" />
          <path d="M10 20.500 h7 v7 h-7z" fill="#00a4ef" />
          <path d="M18.500 20.500 h7 v7 h-7z" fill="#ffb900" />
        </svg>
      </Slot>
      <Slot>
        <svg width="37" height="32" viewBox="0 0 37 32">
          <path d="M6 9 L20 0.500 Q22 0 24 1 L36 10 V27 Q36 31 32 31 H8 Q6 30 6 28 Z" fill="#1e8fd8" />
          <path d="M12 5 L20 0.500 Q22 0 24 1 L30 5 L16 14 Z" fill="#57b9ef" />
          <path d="M30 6 L36 10 V14 L18 26 V19 Z" fill="#1246a0" />
          <path d="M18 24 L36 13 V27 Q36 31 32 31 H8 Z" fill="#45cef4" />
          <rect x="0.500" y="7" width="18" height="18" rx="1.500" fill="#0f63b8" />
          <ellipse cx="9.500" cy="16" rx="4" ry="4.800" fill="none" stroke="#fff" strokeWidth="2.400" />
        </svg>
      </Slot>
      <Slot>
        <svg width="36" height="28" viewBox="0 0 36 28">
          <rect x="0.700" y="0.700" width="34.600" height="26.600" fill="#eaf1f7" stroke="#a9b3bf" strokeWidth="1.500" />
          <path d="M2 22 L8 19 L10 6 L13 14 L16 12 L19 21 L23 18 L25 6 L27 17 L34 15 V26 H2 Z" fill="#9fd4f6" />
          <path d="M2 22 L8 19 L10 6 L13 14 L16 12 L19 21 L23 18 L25 6 L27 17 L34 15" fill="none" stroke="#3b82b8" strokeWidth="1.300" />
        </svg>
      </Slot>
      <Slot running>
        <svg width="36" height="33" viewBox="0 0 36 33">
          <path d="M0 2 Q0 0 2 0 H12 L16 4 V10 H0 Z" fill="#e09f00" />
          <path d="M0 6 H12 L15 3.500 H34 Q36 3.500 36 5 V33 H0 Z" fill="#ffcf43" />
          <path d="M6 33 V26 Q6 22 10 22 H26 Q30 22 30 26 V33 Z" fill="#0f73c9" />
          <path d="M11 27 H25" stroke="#0a4f90" strokeWidth="1.500" />
        </svg>
      </Slot>
      <Slot>
        <svg width="28" height="36" viewBox="0 0 28 36">
          <path d="M0 2 H28 V35 Q28 36 27 36 H1 Q0 36 0 35 Z" fill="#62c8e6" />
          <path d="M0 30 H28 V33 H0 Z" fill="#e8e8e8" />
          <path d="M0 33 H28 V35 Q28 36 27 36 H1 Q0 36 0 35 Z" fill="#b8590f" />
          <path d="M5 11 H23 M5 17 H23 M5 23 H23" stroke="#0c6d93" strokeWidth="2" />
          <path d="M4.500 0 V4 M11 0 V4 M17.500 0 V4 M24 0 V4" stroke="#0c6d93" strokeWidth="2.500" />
        </svg>
      </Slot>
      <Slot running>
        <svg width="36" height="36" viewBox="0 0 36 36">
          <circle cx="18" cy="18" r="17.700" fill="#2c9c4a" />
          <path d="M18 18 L2.700 9 A17.700 17.700 0 0 1 33.300 9 Z" fill="#e33b2e" />
          <path d="M18 9 H33.300 A17.700 17.700 0 0 1 17 35.700 L26 22 Z" fill="#fbc116" />
          <circle cx="18" cy="18" r="8.800" fill="#fff" />
          <circle cx="18" cy="18" r="6.900" fill="#2a79ee" />
        </svg>
      </Slot>
      <Slot running>
        <svg width="36" height="36" viewBox="0 0 36 36">
          <path d="M1.500 34.500 L4 25.500 A15.500 15.500 0 1 1 10 31.800 Z" fill="none" stroke="#25d366" strokeWidth="3" />
          <path d="M11 10 Q13 8.500 14 10.500 L15.500 14 Q15.500 15 14 16.500 Q16 21 21 22.500 L23 20.500 Q24 20 27 22 Q28 23 27 24.500 Q25 27 21 26.500 Q11 23 9 14.500 Q9 11.500 11 10 Z" fill="#25d366" />
        </svg>
        <div className="absolute top-[9px] right-[5px] flex h-[25px] w-[28px] items-center justify-center rounded-full bg-[#4cc2ff] text-[16px] tracking-[-1px] text-[#10202c]">21</div>
      </Slot>
      <Slot running>
        <svg width="36" height="33" viewBox="0 0 36 33">
          <circle cx="20" cy="16.500" r="16" fill="#d9532f" />
          <path d="M20 0.500 A16 16 0 0 1 36 16.500 H20 Z" fill="#ff9270" />
          <path d="M20 0.500 A16 16 0 0 0 4 16.500 H20 Z" fill="#f0704a" />
          <rect x="0" y="7" width="18.500" height="18.500" rx="1.500" fill="#c23e1c" />
        </svg>
        <span className="absolute top-[22px] left-[18px] text-[16px] leading-[24px] font-bold">P</span>
      </Slot>
      <Slot running>
        <svg width="34" height="33" viewBox="0 0 34 33" className="mb-[3px]">
          <rect width="34" height="33" rx="5" fill="#b30b00" />
          <path d="M8 25 Q17 19 17.500 10 Q17.500 6.500 15.500 8.500 Q14.500 15 23 21 Q28 22 26.500 20 Q22 18 12 21.500 Q6.500 24.500 8 25.500 Q11 26 15 18" fill="none" stroke="#fff" strokeWidth="1.800" />
        </svg>
      </Slot>
      <Slot running>
        <svg width="28" height="37" viewBox="0 0 28 37">
          <rect width="28" height="36" rx="1.500" fill="#76838f" />
          <rect x="3" y="3" width="22" height="6" fill="#3cc6f0" />
          <path d="M3 11.500 h6 v6 h-6z M11 11.500 h6 v6 h-6z M19 11.500 h6 v6 h-6z M3 19.500 h6 v6 h-6z M11 19.500 h6 v6 h-6z M3 27.500 h6 v6 h-6z M11 27.500 h6 v6 h-6z" fill="#dfe4e8" />
          <rect x="19" y="19.500" width="6" height="14" fill="#124a8c" />
        </svg>
      </Slot>
      <div className="relative ml-[3px] h-[60px] w-[60px] shrink-0 rounded-[6px] border border-[#30334a]">
        <div className="absolute -top-px -left-px flex h-[60px] w-[54px] items-center justify-center rounded-[6px] border border-[#41445a] bg-[#2c2f43] pl-[4px]">
          <TracerIcon size={35} dark />
          <div className="absolute bottom-0 left-[17px] h-[5px] w-[24px] rounded-full bg-[#4cc2ff]" />
        </div>
      </div>
      <svg width="17" height="11" viewBox="0 0 17 11" fill="none" stroke="#fff" strokeWidth="2" className="ml-[105px] shrink-0">
        <path d="M1 9.500 L8.500 1.500 L16 9.500" />
      </svg>
      <svg width="26" height="28" viewBox="0 0 26 28" fill="none" stroke="#e8e8e8" strokeWidth="1.400" className="ml-[27px] shrink-0">
        <path d="M2 14 Q2.500 3 13 2 Q21 2.500 24 9.500 M24 2 V9.500 H17 M2 26 V18.500 H9 M2.500 19 Q6 26 13 25.500" />
        <circle cx="18.500" cy="20" r="6.200" fill="#ff9800" stroke="none" />
      </svg>
      <div className="ml-[19px] w-[50px] shrink-0 text-center text-[17.500px] leading-[22px] tracking-[-0.3px]">
        ENG
        <br />
        IN
      </div>
      <svg width="26" height="20" viewBox="0 0 26 20" fill="none" stroke="#fff" strokeWidth="1.900" className="ml-[19px] shrink-0">
        <path d="M1 7 Q13 -4.500 25 7 M5 11 Q13 3 21 11 M8.500 14.500 Q13 10 17.500 14.500" />
        <circle cx="13" cy="17.200" r="2.200" fill="#fff" stroke="none" />
      </svg>
      <svg width="26" height="22" viewBox="0 0 26 22" fill="none" stroke="#fff" strokeWidth="1.700" className="ml-[10px] shrink-0">
        <path d="M1 8 H5 L11 2 V20 L5 14 H1 Z M14.500 7 Q17 11 14.500 15 M18 4.500 Q22 11 18 17.500 M21.500 2 Q27.500 11 21.500 20" />
      </svg>
      <svg width="26" height="17" viewBox="0 0 26 17" fill="none" stroke="#fff" strokeWidth="1.800" className="ml-[10px] shrink-0">
        <rect x="1" y="1" width="20.500" height="15" rx="3" />
        <rect x="3.500" y="3.500" width="11" height="10" fill="#fff" stroke="none" />
        <path d="M23.500 6 V11" strokeWidth="2.500" />
      </svg>
      <div className="ml-[16px] w-[101px] shrink-0 text-right text-[18px] leading-[24px] tracking-[-0.100px] whitespace-nowrap">
        14:22
        <br />
        16-03-2025
      </div>
      <svg width="24" height="24" viewBox="0 0 24 24" fill="none" stroke="#fff" strokeWidth="1.700" className="ml-[12px] shrink-0">
        <path d="M11 2.500 Q4 4 4 10 V14 L1.500 18.500 H19.500 L17.500 15 V13 M8 19 Q10.500 24.500 13.500 19 M9 8.500 H13.500 L9 14 H13.500 M15.500 1 H21.500 L15.500 8 H21.500" />
      </svg>
    </div>
  );
}

export default function App() {
  return (
    <div className="relative flex h-[1080px] w-[1920px] flex-col overflow-hidden bg-[#efefef] font-['Liberation_Sans',Arial,sans-serif]">
      <div className="flex h-[34px] items-center bg-[#f3f3f3] pl-[2px]">
        <TracerIcon size={24} />
        <span className="ml-[6px] pt-px font-['Open_Sans','Noto_Sans',sans-serif] text-[17px] tracking-[-0.160px] text-[#8f8f8f]">Cisco Packet Tracer</span>
        <svg width="156" height="16" viewBox="0 0 156 16" fill="none" stroke="#8c8c8c" strokeWidth="1.300" className="mr-[28px] ml-auto">
          <path d="M0 7.500 H15 M140.500 0.500 L155 15 M155 0.500 L140.500 15 M72.500 1 H80 Q83.500 1 83.500 4.500 V11.500" />
          <rect x="69.500" y="4" width="11" height="11" rx="2" />
        </svg>
      </div>
      <MenuBar />
      <ToolbarMain />
      <ToolbarDraw />
      <LocationBar />
      <Workspace />
      <TimeBar />
      <div className="flex h-[130px] shrink-0">
        <DevicePalette />
        <CablePanel />
        <PduPanel />
      </div>
      <Taskbar />
      <Dialog />
    </div>
  );
}
